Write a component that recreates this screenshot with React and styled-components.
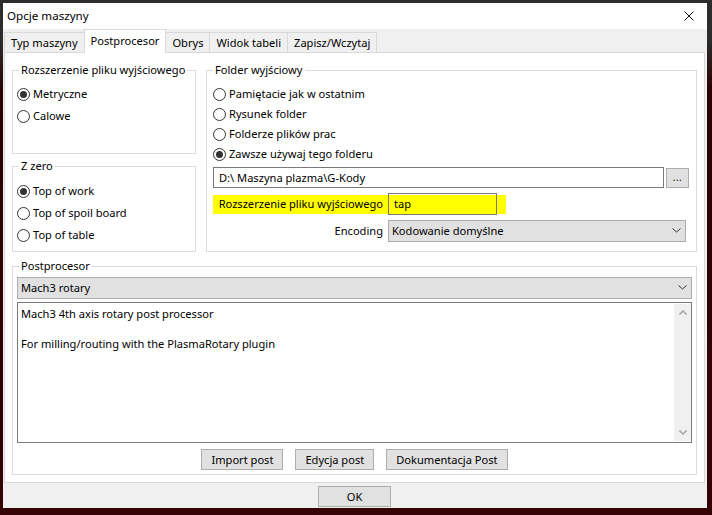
import styled, { createGlobalStyle } from "styled-components";

const Global = createGlobalStyle`
  html, body {
    margin: 0;
    padding: 0;
  }
  body {
    font-family: "Segoe UI", "Noto Sans", sans-serif;
    font-size: 11.1px;
    color: #000;
  }
  * {
    box-sizing: border-box;
  }
`;

const Screen = styled.div`
  width: 712px;
  height: 515px;
  overflow: hidden;
  padding: 3px 0 0 3px;
  background: linear-gradient(to bottom, #2d2d2d 0, #2d2d2d 40px, #2a0303 90px, #350303 100%);
`;

const Window = styled.div`
  width: 704px;
  height: 505px;
  display: flex;
  flex-direction: column;
  background: #f0f0f0;
`;

const TitleBar = styled.div`
  height: 26px;
  flex: none;
  background: #fff;
  display: flex;
  align-items: center;
  justify-content: space-between;
  padding-left: 4px;
`;

const Title = styled.span`
  font-size: 11.6px;
  line-height: 16px;
`;

const CloseBox = styled.div`
  width: 30px;
  height: 26px;
  margin-right: 3px;
  display: flex;
  align-items: center;
  justify-content: center;
`;

const Body = styled.div`
  flex: 1;
  display: flex;
  flex-direction: column;
  padding: 0 2px 0 1px;
`;

const TabStrip = styled.div`
  height: 23px;
  display: flex;
  align-items: flex-end;
  position: relative;
  z-index: 1;
`;

const Tab = styled.div`
  height: ${(p) => (p.$active ? 24 : 20)}px;
  margin-bottom: ${(p) => (p.$active ? -1 : 0)}px;
  margin-left: -1px;
  padding: 0 6px ${(p) => (p.$active ? 2 : 0)}px;
  display: flex;
  align-items: center;
  background: ${(p) => (p.$active ? "#fff" : "#f0f0f0")};
  border: 1px solid #d9d9d9;
  border-bottom: none;
  line-height: 15px;
  white-space: nowrap;

  &:first-child {
    margin-left: 0;
  }
`;

const Panel = styled.div`
  height: 431px;
  background: #fff;
  border: 1px solid #d9d9d9;
  padding: 17px 7px 0;
`;

const TopArea = styled.div`
  display: grid;
  grid-template-columns: 184px 491px;
  column-gap: 10px;
`;

const Column = styled.div`
  display: flex;
  flex-direction: column;
  gap: 12px;
`;

const GroupBox = styled.div`
  position: relative;
  height: ${(p) => p.$h}px;
  margin-top: ${(p) => p.$mt || 0}px;
  border: 1px solid #dcdcdc;
  padding: ${(p) => p.$pad};
  display: flex;
  flex-direction: column;
`;

const Caption = styled.span`
  position: absolute;
  top: -9px;
  left: 6px;
  padding: 0 2px;
  background: #fff;
  line-height: 15px;
  white-space: nowrap;
`;

const RadioRow = styled.label`
  height: ${(p) => p.$h}px;
  display: flex;
  align-items: center;
  gap: 3px;
  white-space: nowrap;
  line-height: 14px;
`;

const RadioCircle = styled.span`
  width: 13px;
  height: 13px;
  flex: none;
  border-radius: 50%;
  border: 1px solid #333;
  background: #fff;
  display: flex;
  align-items: center;
  justify-content: center;

  &::after {
    content: "";
    width: 7px;
    height: 7px;
    border-radius: 50%;
    background: ${(p) => (p.$checked ? "#333" : "transparent")};
  }
`;

const RadioText = styled.span`
  margin-top: -1px;
`;

const PathRow = styled.div`
  margin-top: 3px;
  display: flex;
  align-items: flex-start;
  gap: 2px;
`;

const TextField = styled.div`
  width: ${(p) => p.$w}px;
  height: ${(p) => p.$h}px;
  border: 1px solid #7a7a7a;
  background: ${(p) => (p.$clear ? "transparent" : "#fff")};
  padding: 0 0 1px 5px;
  display: flex;
  align-items: center;
  white-space: nowrap;
`;

const SmallButton = styled.div`
  width: 23px;
  height: 20px;
  margin-top: 1px;
  background: #e1e1e1;
  border: 1px solid #adadad;
  display: flex;
  align-items: center;
  justify-content: center;
  font-size: 10px;
  letter-spacing: 0.5px;
  padding-bottom: 2px;
`;

const FieldRow = styled.div`
  margin-top: ${(p) => p.$mt}px;
  width: ${(p) => (p.$marked ? "293px" : "auto")};
  display: grid;
  grid-template-columns: 171px auto;
  justify-content: start;
  column-gap: 4px;
  align-items: center;
  background: ${(p) =>
    p.$marked ? "linear-gradient(#ffff00, #ffff00) 0 2px / 293px 19px no-repeat" : "none"};
`;

const FieldLabel = styled.span`
  text-align: right;
  white-space: nowrap;
  padding: 0 1px 1px 0;
`;

const Select = styled.div`
  width: ${(p) => (p.$w ? `${p.$w}px` : "auto")};
  height: 22px;
  background: #e1e1e1;
  border: 1px solid #adadad;
  padding: 0 4px 1px 3px;
  display: flex;
  align-items: center;
  justify-content: space-between;
  white-space: nowrap;
`;

const TextBox = styled.div`
  margin-top: 3px;
  height: 141px;
  border: 1px solid #7a7a7a;
  display: flex;
`;

const TextContent = styled.div`
  flex: 1;
  padding: 3px 3px;
  line-height: 15px;
  white-space: pre-line;
`;

const ScrollBar = styled.div`
  width: 17px;
  margin: 1px 0;
  background: #f0f0f0;
  display: flex;
  flex-direction: column;
  justify-content: space-between;
`;

const ScrollArrow = styled.div`
  height: 17px;
  display: flex;
  align-items: center;
  justify-content: center;
`;

const ButtonRow = styled.div`
  margin-top: 6px;
  display: flex;
  justify-content: center;
  gap: 12px;
`;

const Button = styled.div`
  height: 21px;
  min-width: ${(p) => p.$minW || 0}px;
  padding: 0 9px 1px;
  background: #e1e1e1;
  border: 1px solid #adadad;
  display: flex;
  align-items: center;
  justify-content: center;
  white-space: nowrap;
`;

const Footer = styled.div`
  flex: 1;
  display: flex;
  justify-content: center;
  padding-top: 3px;
`;

const Chevron = ({ up, color = "#333", w = 9, h = 5, sw = 1 }) => (
  <svg width={w} height={h} viewBox={`0 0 ${w} ${h}`}>
    <path
      d={up ? `M0.5 ${h - 0.5} L${w / 2} 1 L${w - 0.5} ${h - 0.5}` : `M0.5 0.5 L${w / 2} ${h - 1} L${w - 0.5} 0.5`}
      fill="none"
      stroke={color}
      strokeWidth={sw}
    />
  </svg>
);

const tabs = ["Typ maszyny", "Postprocesor", "Obrys", "Widok tabeli", "Zapisz/Wczytaj"];

const Radio = ({ h, checked, children }) => (
  <RadioRow $h={h}>
    <RadioCircle $checked={checked} />
    <RadioText>{children}</RadioText>
  </RadioRow>
);

export default function App() {
  return (
    <Screen>
      <Global />
      <Window>
        <TitleBar>
          <Title>Opcje maszyny</Title>
          <CloseBox>
            <svg width="10" height="10" viewBox="0 0 10 10">
              <path d="M0.5 0.5 L9.5 9.5 M9.5 0.5 L0.5 9.5" stroke="#111" strokeWidth="1" />
            </svg>
          </CloseBox>
        </TitleBar>
        <Body>
          <TabStrip>
            {tabs.map((t) => (
              <Tab key={t} $active={t === "Postprocesor"}>
                {t}
              </Tab>
            ))}
          </TabStrip>
          <Panel>
            <TopArea>
              <Column>
                <GroupBox $h={84} $pad="12px 4px 0">
                  <Caption>Rozszerzenie pliku wyjściowego</Caption>
                  <Radio h={22} checked>
                    Metryczne
                  </Radio>
                  <Radio h={22}>Calowe</Radio>
                </GroupBox>
                <GroupBox $h={86} $pad="13px 4px 0">
                  <Caption>Z zero</Caption>
                  <Radio h={22} checked>
                    Top of work
                  </Radio>
                  <Radio h={22}>Top of spoil board</Radio>
                  <Radio h={22}>Top of table</Radio>
                </GroupBox>
              </Column>
              <GroupBox $h={182} $pad="13px 6px 0">
                <Caption>Folder wyjściowy</Caption>
                <Radio h={20}>Pamiętacie jak w ostatnim</Radio>
                <Radio h={20}>Rysunek folder</Radio>
                <Radio h={20}>Folderze plików prac</Radio>
                <Radio h={20} checked>
                  Zawsze używaj tego folderu
                </Radio>
                <PathRow>
                  <TextField $w={451} $h={21}>
                    D:\ Maszyna plazma\G-Kody
                  </TextField>
                  <SmallButton>...</SmallButton>
                </PathRow>
                <FieldRow $mt={5} $marked>
                  <FieldLabel>Rozszerzenie pliku wyjściowego</FieldLabel>
                  <TextField $w={109} $h={22} $clear>
                    tap
                  </TextField>
                </FieldRow>
                <FieldRow $mt={5}>
                  <FieldLabel>Encoding</FieldLabel>
                  <Select $w={298}>
                    <span>Kodowanie domyślne</span>
                    <Chevron />
                  </Select>
                </FieldRow>
              </GroupBox>
            </TopArea>
            <GroupBox $h={209} $mt={14} $pad="10px 4px 0">
              <Caption>Postprocesor</Caption>
              <Select>
                <span>Mach3 rotary</span>
                <Chevron />
              </Select>
              <TextBox>
                <TextContent>
                  {"Mach3 4th axis rotary post processor\n\nFor milling/routing with the PlasmaRotary plugin"}
                </TextContent>
                <ScrollBar>
                  <ScrollArrow>
                    <Chevron up color="#a8a8a8" w={8} h={5} sw={1.6} />
                  </ScrollArrow>
                  <ScrollArrow>
                    <Chevron color="#a8a8a8" w={8} h={5} sw={1.6} />
                  </ScrollArrow>
                </ScrollBar>
              </TextBox>
              <ButtonRow>
                <Button>Import post</Button>
                <Button>Edycja post</Button>
                <Button>Dokumentacja Post</Button>
              </ButtonRow>
            </GroupBox>
          </Panel>
          <Footer>
            <Button $minW={73}>OK</Button>
          </Footer>
        </Body>
      </Window>
    </Screen>
  );
}
